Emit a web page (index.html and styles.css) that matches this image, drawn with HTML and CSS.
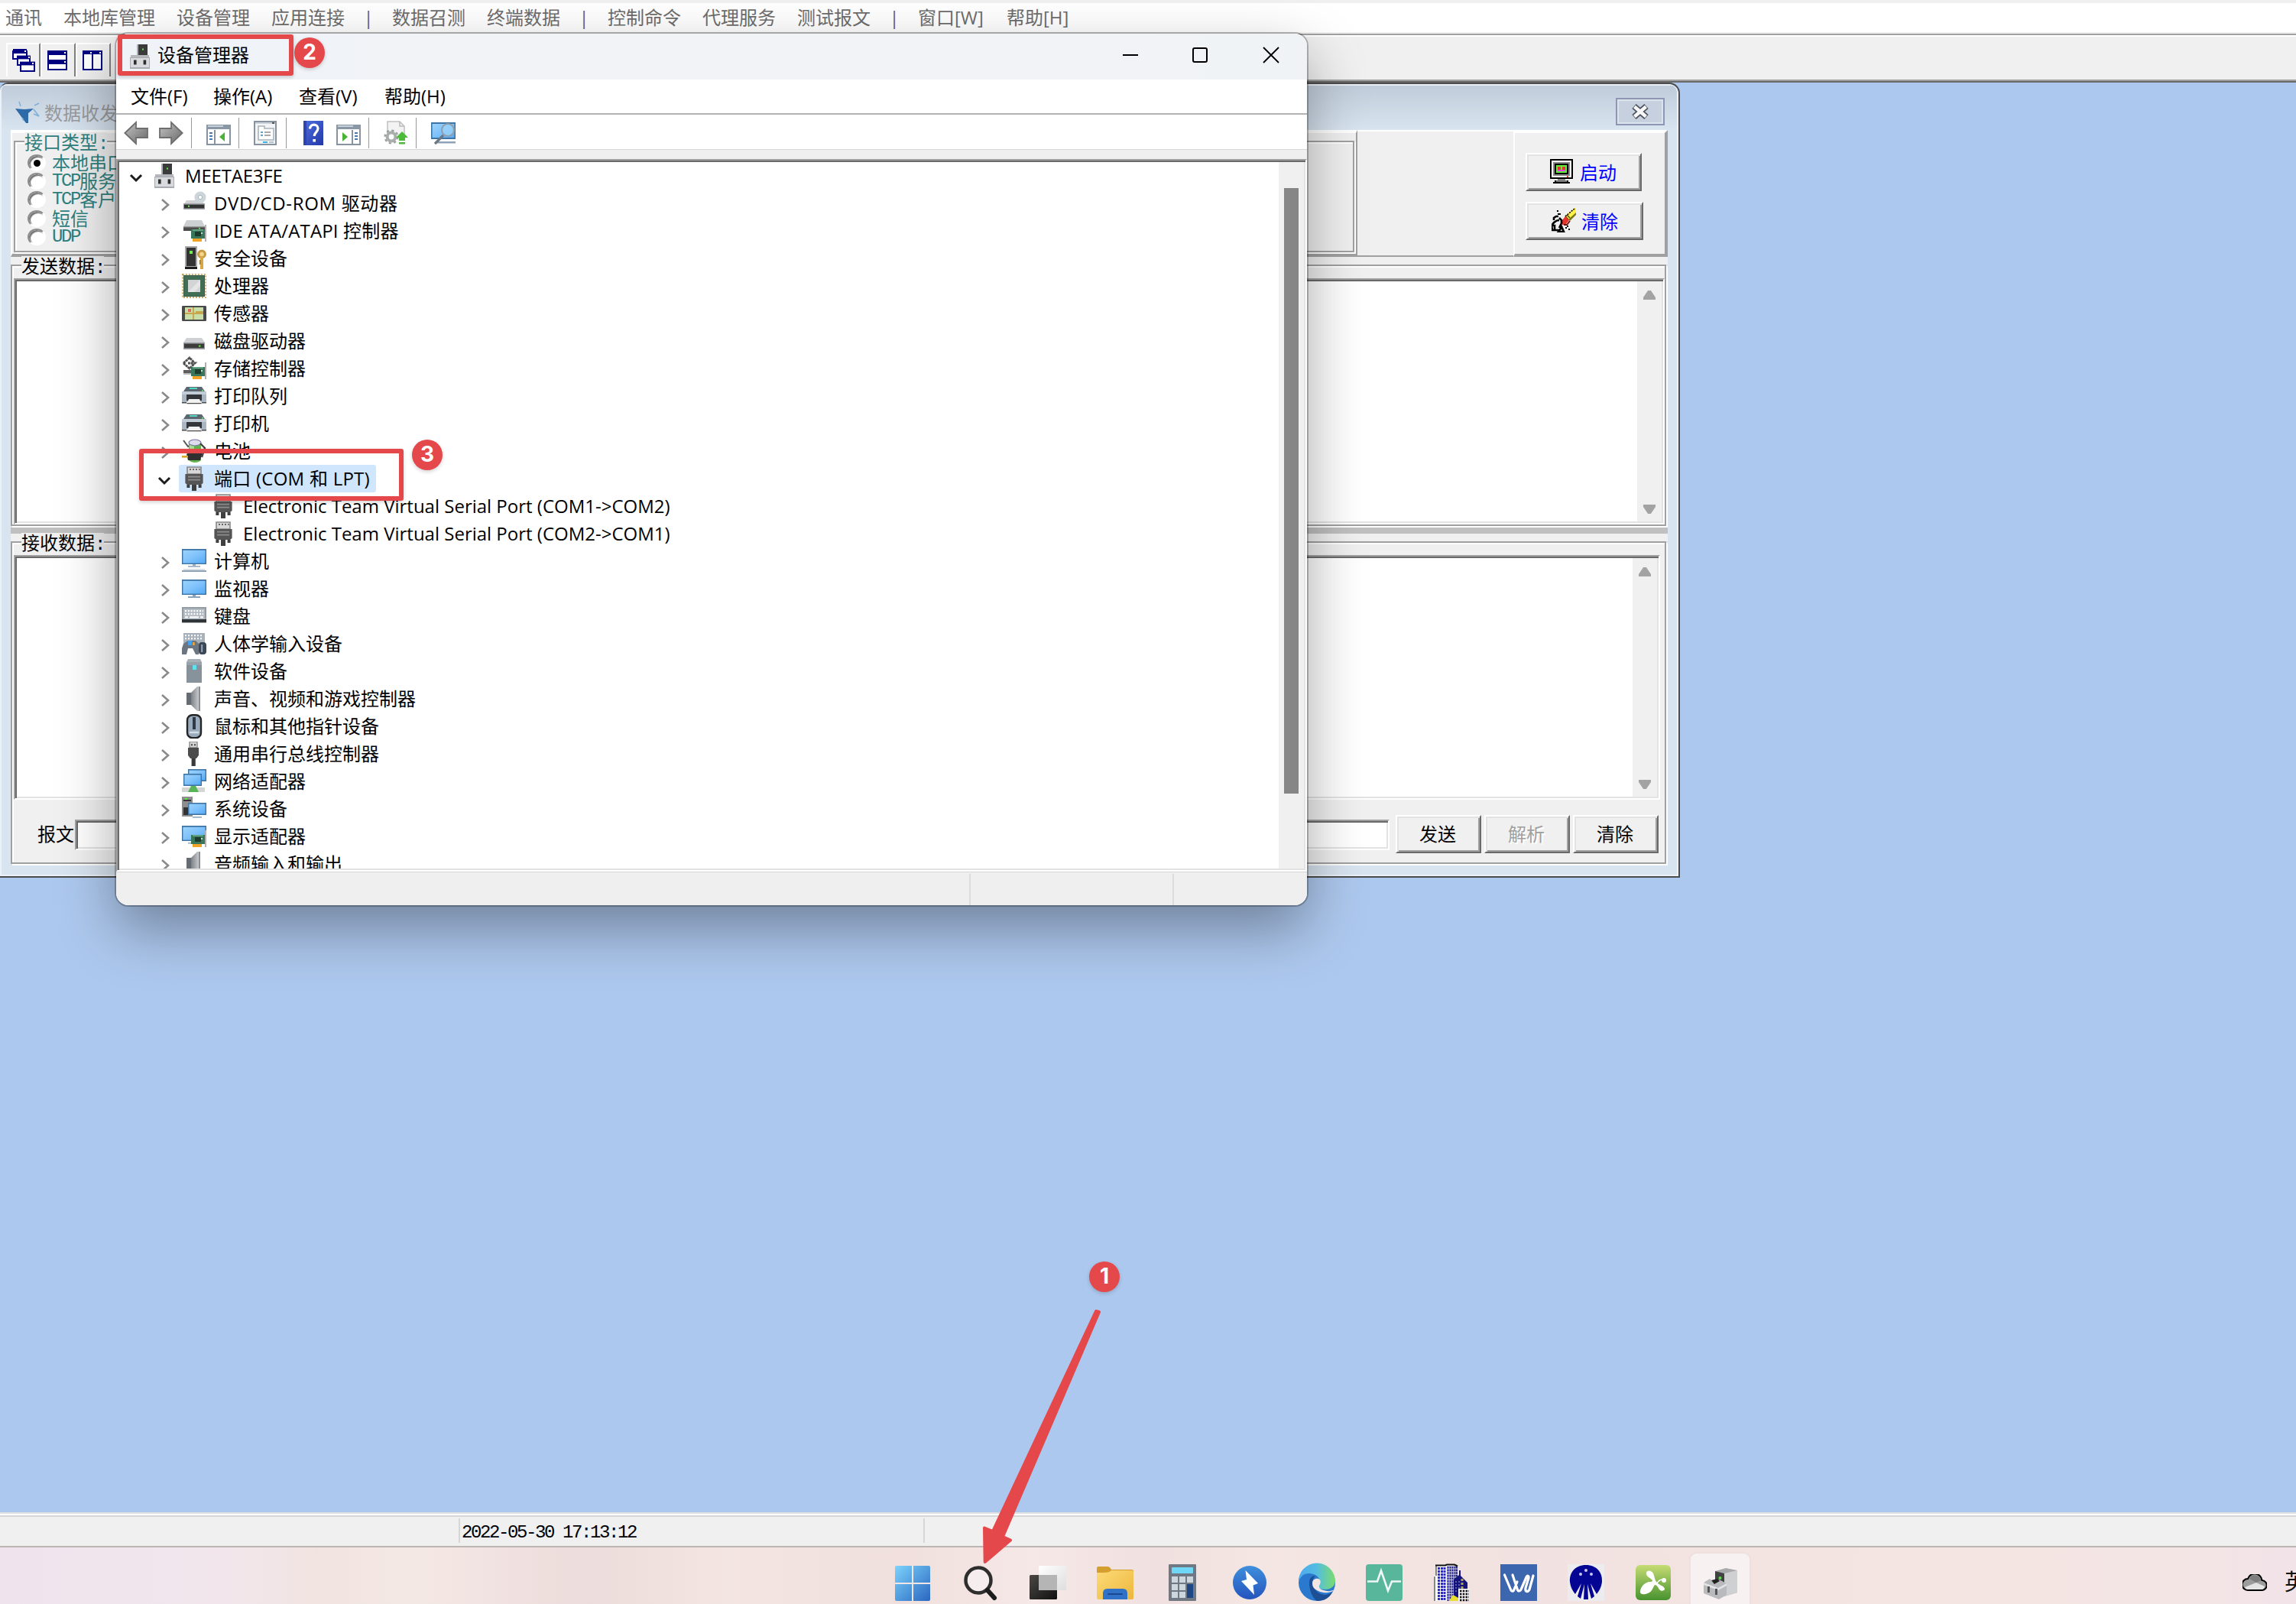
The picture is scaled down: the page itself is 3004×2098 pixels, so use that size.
FILE: index.html
```html
<!DOCTYPE html>
<html lang="zh-CN">
<head>
<meta charset="utf-8">
<title>设备管理器</title>
<link rel="stylesheet" href="styles.css">
</head>
<body>
<svg class="defs" width="0" height="0" aria-hidden="true">
  <defs>
    <linearGradient id="scr" x1="0" y1="0" x2="1" y2="1"><stop offset="0" stop-color="#9bd3fb"/><stop offset=".5" stop-color="#7fc2fb"/><stop offset="1" stop-color="#55aaf6"/></linearGradient>
    <linearGradient id="metal" x1="0" y1="0" x2="1" y2="0"><stop offset="0" stop-color="#7d8287"/><stop offset="1" stop-color="#d5d8db"/></linearGradient>
    <linearGradient id="arrowg" x1="0" y1="0" x2="1" y2="1"><stop offset="0" stop-color="#c4c4c4"/><stop offset="1" stop-color="#686868"/></linearGradient>
    <linearGradient id="helpg" x1="0" y1="0" x2="1" y2="1"><stop offset="0" stop-color="#4d6fe0"/><stop offset="1" stop-color="#2338a8"/></linearGradient>
    <linearGradient id="win" x1="0" y1="0" x2="1" y2="1"><stop offset="0" stop-color="#7cd3fc"/><stop offset="1" stop-color="#2a66c0"/></linearGradient>
    <linearGradient id="bolt" x1="0" y1="0" x2="0" y2="1"><stop offset="0" stop-color="#3f8fdc"/><stop offset="1" stop-color="#2454bd"/></linearGradient>
    <linearGradient id="fold" x1="0" y1="0" x2="1" y2="1"><stop offset="0" stop-color="#fddb78"/><stop offset="1" stop-color="#ecb63c"/></linearGradient>
    <linearGradient id="edgeTop" x1="0" y1="0" x2="1" y2="0"><stop offset="0" stop-color="#4da9ee"/><stop offset=".5" stop-color="#55bde0"/><stop offset="1" stop-color="#7bdc6b"/></linearGradient>
    <linearGradient id="green" x1="0" y1="0" x2="0" y2="1"><stop offset="0" stop-color="#c6dc74"/><stop offset="1" stop-color="#47922f"/></linearGradient>
    <linearGradient id="dark" x1="0" y1="0" x2="1" y2="1"><stop offset="0" stop-color="#4b4845"/><stop offset="1" stop-color="#111"/></linearGradient>
    <linearGradient id="pane" x1="0" y1="0" x2="1" y2="1"><stop offset="0" stop-color="#fff"/><stop offset="1" stop-color="#dedede"/></linearGradient>

    <symbol id="i-pc" viewBox="0 0 16 16"><path d="M7 0h6v8H7z" fill="#3b3b3b"/><path d="M6 0h1v8H6z" fill="#aab0b5"/><path d="M9.5 2.8h1v1h-1z" fill="#5ff04a"/><path d="M2 7h12v2H2z" fill="#b5b7bd"/><path d="M1.5 8.5h13V16h-13z" fill="#a9abb3"/><path d="M2 9h12v6H2z" fill="#d9dade"/><path d="M4 10.3h1.8v3H4zM10.3 10.3h1.8v3h-1.8z" fill="#2e2e2e"/></symbol>
    <symbol id="i-dvd" viewBox="0 0 16 16"><path d="M3 6h10l2 3H1z" fill="#cfd1d4"/><circle cx="12" cy="4" r="3.8" fill="#ccd5da"/><circle cx="12" cy="4" r="1.3" fill="#fff" stroke="#a9b5bb" stroke-width=".5"/><path d="M1 8h14v4H1z" fill="#a2a5a9"/><path d="M1.4 8.8h13.2v2.4H1.4z" fill="#333"/><path d="M4 9.4h1v1H4z" fill="#5ff04a"/></symbol>
    <symbol id="i-card" viewBox="0 0 16 16"><path d="M6 7h9v6H6z" fill="#39765a"/><path d="M7 7h7v1H7z" fill="#60a384"/><path d="M8.5 8.5h4v3h-4z" fill="#1d3c2e"/><path d="M12.5 9h1v1h-1z" fill="#b9e3ce"/><path d="M7 13h6v2H7z" fill="#f0a326"/><path d="M15 4h1v11h-1z" fill="#b0b0b0"/></symbol>
    <symbol id="i-ide" viewBox="0 0 16 16"><path d="M3 1h10l2 4H1z" fill="#cdd0d3"/><path d="M1 5h14v3H1z" fill="#4c4c4c"/><path d="M1 5h14v.7H1z" fill="#999"/><path d="M11 6h1v.8h-1z" fill="#5ff04a"/><use href="#i-card"/></symbol>
    <symbol id="i-sec" viewBox="0 0 16 16"><path d="M2 0h8v14H2z" fill="#a9a9a9"/><path d="M3 1h6v12H3z" fill="#333"/><path d="M5 3h2v2H5z" fill="#6fee4f"/><path d="M2 13.5h8V15H2z" fill="#1e1e1e"/><circle cx="13" cy="5.2" r="2.2" fill="#f0d490" stroke="#c99a3d" stroke-width="1.5"/><path d="M12 7h2v8h-2z" fill="#d9a743"/><path d="M11.400 9h1v3h-1z" fill="#b4822c"/></symbol>
    <symbol id="i-cpu" viewBox="0 0 16 16"><rect x=".4" y=".4" width="15.2" height="15.2" fill="none" stroke="#c5a256" stroke-width=".9" stroke-dasharray="1 1"/><path d="M1 1h14v14H1z" fill="#375b47"/><path d="M1.5 1.5h13v13h-13z" fill="#416e55"/><path d="M4 4h8v8H4z" fill="#d3d4d6"/><path d="M4 12l8-8v4l-4 4z" fill="#e5e5e5"/></symbol>
    <symbol id="i-sens" viewBox="0 0 16 16"><rect y="3" width="16" height="10" rx=".6" fill="#4a4a4a"/><path d="M2 4h12v8H2z" fill="#c9dfaa"/><path d="M2 8h12M7.5 4v8M9 7h5" stroke="#c8a64b" stroke-width="1"/><path d="M4 5h2v2H4z" fill="#e3685e"/></symbol>
    <symbol id="i-disk" viewBox="0 0 16 16"><path d="M3 6h10l2 3H1z" fill="#cfd1d4"/><path d="M1 9h14v4.5H1z" fill="#9a9da1"/><path d="M1.5 9.8h13v2.8h-13z" fill="#3c3c3c"/><path d="M11 10.8h1.2v1H11z" fill="#5ff04a"/></symbol>
    <symbol id="i-stor" viewBox="0 0 16 16"><path d="M1 4.5L5 1l3 3M1 4.500L5 8l3.500-3.500H4" fill="none" stroke="#4d4d4d" stroke-width="1.400" stroke-dasharray="1.600 .3"/><path d="M1 9h8v3H1z" fill="#5d5d5d"/><path d="M1 11h8v1H1z" fill="#bbb"/><use href="#i-card"/></symbol>
    <symbol id="i-print" viewBox="0 0 16 16"><path d="M3 2h10l2 3H1z" fill="#5b6670"/><path d="M5 2.5h5v1H5z" fill="#51d8c0"/><path d="M13 4h1v.8h-1z" fill="#63ef4a"/><path d="M0 5h16v7H0z" fill="#a9b5c1"/><path d="M0 5h16v2H0z" fill="#c2ccd6"/><path d="M3 7h10v4H3z" fill="#33363a"/><path d="M4.5 10h7l1 2.500h-9z" fill="#f2f2f2"/><path d="M0 12h3v.8H0zM13 12h3v.8h-3zM3.2 12.5h9.6v.6H3.2z" fill="#4c4c4c"/></symbol>
    <symbol id="i-batt" viewBox="0 0 16 16"><path d="M1 1l3 4 2-1" fill="none" stroke="#555"/><path d="M4.500 3h8v11c-2 2-6 2-8 0z" fill="#62b34b"/><path d="M5 3h3v11H5z" fill="#a8dd91"/><ellipse cx="8.500" cy="2.500" rx="4" ry="2" fill="#dcdcec" stroke="#7776a1" stroke-width=".6"/><path d="M12 3l3 3-2 6" fill="none" stroke="#444" stroke-width="1.200"/><path d="M3 10c4-3 8-2 11-3l-2 7H4z" fill="#303030"/><path d="M0 11h4v1.300H0z" fill="#dba429"/></symbol>
    <symbol id="i-port" viewBox="0 0 16 16"><path d="M3.5.5h9V5h-9z" fill="#d8d8d8" stroke="#888" stroke-width=".8"/><path d="M5 2h1M7 2h1M9 2h1M11 2h.8" stroke="#666"/><path d="M2.2 5h11.6v6l-1.3 1H3.5l-1.3-1z" fill="#555"/><path d="M4 6.8h8M4 8.8h8" stroke="#8d8d8d" stroke-width=".8"/><path d="M3.2 12h2v2h-2zM10.8 12h2v2h-2zM6.5 12h3v4h-3z" fill="#3f3f3f"/></symbol>
    <symbol id="i-comp" viewBox="0 0 16 16"><path d="M0 0h16v10H0z" fill="#3f75a5"/><path d="M.7 .9h14.6v8.4H.7z" fill="url(#scr)"/><path d="M4 11h8v.9H4zM7 10h2v1H7z" fill="#9fb0bf"/><path d="M0 14h16v1H0z" fill="#8fa3b7"/><path d="M1 13h14v1H1z" fill="#d9dfe5"/></symbol>
    <symbol id="i-mon" viewBox="0 0 16 16"><path d="M0 2h16v10H0z" fill="#3f75a5"/><path d="M.7 2.9h14.6v8.4H.7z" fill="url(#scr)"/><path d="M4 13h8v1H4zM7 12h2v1H7z" fill="#8fa3b7"/></symbol>
    <symbol id="i-key" viewBox="0 0 16 16"><path d="M0 2h16v10H0z" fill="#939ca5"/><path d="M1 3h14v7H1z" fill="#b4bcc3"/><path d="M2 4.600h12M2 6.600h12" stroke="#fff" stroke-dasharray="1 .9" stroke-width="1.100"/><path d="M2 8.600h2M5 8.600h6M12 8.600h2" stroke="#fff"/><path d="M0 10h16v2.200H0z" fill="#2f3439"/></symbol>
    <symbol id="i-hid" viewBox="0 0 16 16"><path d="M1 1h14v8H1z" fill="#a9b2ba"/><path d="M2 2.6h12M2 4.6h12" stroke="#fff" stroke-dasharray="1 1"/><path d="M1 8l3-2h5l2 2v7H9l-2-4H4l-1 4H0v-4z" fill="#6c7680"/><path d="M4 6h2.5v3H4z" fill="#46a2ee"/><path d="M7 7h1.4v2H7z" fill="#e7a43c"/><rect x="11" y="7" width="5" height="8" rx="2" fill="#3b4754"/><path d="M12.600 8.500h1v5h-1z" fill="#98a8b8"/></symbol>
    <symbol id="i-soft" viewBox="0 0 16 16"><path d="M4 0h8l1 2H3z" fill="#a9b0b6"/><path d="M3 2h10v13.5H3z" fill="#87929b"/><path d="M3 2h10v2H3z" fill="#98a2aa"/><path d="M7 4h2.5v3H7z" fill="#5fe2ef"/></symbol>
    <symbol id="i-snd" viewBox="0 0 16 16"><path d="M3 4h3v8H3z" fill="#666c72"/><path d="M6 4l4-4h2v16h-2l-4-4z" fill="url(#metal)"/><path d="M11 0h1v16h-1z" fill="#8b8f93"/></symbol>
    <symbol id="i-mouse" viewBox="0 0 16 16"><rect x="3.5" y=".6" width="9" height="15" rx="3.4" fill="#9aabbd" stroke="#242424" stroke-width="1.2"/><path d="M7 2h2v8H7z" fill="#2f3a45"/><path d="M5 12h6" stroke="#d4dde5" stroke-width="1.2"/></symbol>
    <symbol id="i-usb" viewBox="0 0 16 16"><path d="M5 0h5v4H5z" fill="#d5d5d5" stroke="#8b8b8b" stroke-width=".7"/><path d="M6 1.6h1v1H6zM8 1.6h1v1H8z" fill="#444"/><path d="M4 4h7v5l-1.5 2h-4L4 9z" fill="#4c4c4c"/><path d="M6.3 11h2.6v5H6.3z" fill="#3a3a3a"/></symbol>
    <symbol id="i-net" viewBox="0 0 16 16"><path d="M4 0h12v8H4z" fill="#3f75a5"/><path d="M4.7.8h10.6v6.4H4.7z" fill="url(#scr)"/><path d="M1 3h12v8H1z" fill="#3f75a5"/><path d="M1.7 3.8h10.6v6.4H1.7z" fill="url(#scr)"/><path d="M0 12h15v3H0z" fill="#d5d5d5"/><path d="M6 11h3l2 4H4z" fill="#58b557"/></symbol>
    <symbol id="i-sys" viewBox="0 0 16 16"><path d="M0 0h7v13H0z" fill="#8d8d8d"/><path d="M1 2h5v1H1zM1 7h3v5H1z" fill="#333"/><path d="M2 1h1.4v1H2z" fill="#5ff04a"/><path d="M4 4h12v8H4z" fill="#3f75a5"/><path d="M4.7 4.8h10.6v6.4H4.7z" fill="url(#scr)"/><path d="M7 13h6v.9H7z" fill="#9fb0bf"/></symbol>
    <symbol id="i-disp" viewBox="0 0 16 16"><path d="M0 1h16v10H0z" fill="#3f75a5"/><path d="M.7 1.9h14.6v8.4H.7z" fill="url(#scr)"/><path d="M4 12h3v.8H4z" fill="#9fb0bf"/><use href="#i-card"/></symbol>
  </defs>
</svg>

<div class="desktop">
  <nav class="menubar">
    <span>通讯</span><span>本地库管理</span><span>设备管理</span><span>应用连接</span><i>|</i>
    <span>数据召测</span><span>终端数据</span><i>|</i>
    <span>控制命令</span><span>代理服务</span><span>测试报文</span><i>|</i>
    <span class="w88">窗口[W]</span><span>帮助[H]</span>
  </nav>
  <div class="toolbar">
    <div class="tbtn"><svg width="30" height="30" viewBox="0 0 15 15"><g fill="#fff" stroke="#000080"><path d="M.5 1.5h9v5h-9z"/><path d="M.5 1.5h9" stroke-width="3"/><path d="M3.500 5.500h8v5h-8z"/><path d="M3 5.500h9" stroke-width="2.400"/><path d="M5.500 9.500h9v5h-9z"/><path d="M5 9.500h10" stroke-width="2.400"/></g><path d="M8 1h1v1H8zM10.500 5h1v1h-1zM13 9h1v1h-1z" fill="#fff"/></svg></div>
    <div class="tbtn"><svg width="26" height="26" viewBox="0 0 13 13"><path d="M.5 .5h12v12H.5z" fill="#fff" stroke="#000080"/><path d="M0 0h13v3H0zM0 6h13v3H0z" fill="#000080"/><path d="M11 1h1v1h-1zM11 7h1v1h-1z" fill="#fff"/></svg></div>
    <div class="tbtn"><svg width="26" height="26" viewBox="0 0 13 13"><path d="M.5 .5h12v12H.5zM6.500 0v13" fill="#fff" stroke="#000080"/><path d="M0 0h13v2.500H0z" fill="#000080"/><path d="M5 1h1v1H5zM11 1h1v1h-1z" fill="#fff"/></svg></div>
  </div>

  <main class="mdi">
    <section class="child">
      <header class="child-title">
        <svg width="34" height="30" viewBox="0 0 34 30"><path d="M1 10l12 1 12-1-7 6v13h-3z" fill="#2d6ba8"/><path d="M6 1l2 6M26 6l6-3M25 11l7 9-7-3M12 26l-2-4" stroke="#7fb0d8" stroke-width="1.600" fill="none"/></svg>
        <span>数据收发</span>
        <div class="child-close"><svg width="24" height="20" viewBox="0 0 24 20"><path d="M4 3l16 14M20 3L4 17" stroke="#4a4f5e" stroke-width="8"/><path d="M4.500 3.500l15 13M19.500 3.500l-15 13" stroke="#f7f7f7" stroke-width="4.600"/></svg></div>
      </header>
      <div class="top-row">
        <div class="panel left">
          <div class="etched radios">
            <span class="legend teal">接口类型<b class="mono">:</b></span>
            <label><i class="radio on"></i>本地串口</label>
            <label><i class="radio"></i><b class="mono">TCP</b>服务器</label>
            <label><i class="radio"></i><b class="mono">TCP</b>客户端</label>
            <label><i class="radio"></i>短信</label>
            <label><i class="radio"></i><b class="mono">UDP</b></label>
          </div>
        </div>
        <div class="panel mid"></div>
        <div class="panel right">
          <div class="btn blue b1">
            <svg width="30" height="32" viewBox="0 0 15 16"><path d="M.5 .5h14v12H.5z" fill="#fff" stroke="#000"/><path d="M2 2h11v9H2z" fill="#888"/><path d="M3 3h9v7H3z" fill="#000"/><path d="M4 4h7v5H4z" fill="#62ee3c"/><path d="M5 5h2v2H5zM8 5h2v2H8z" fill="#e8322c"/><path d="M5 7h5v1H5z" fill="#e83be8"/><path d="M11 11h1v1h-1z" fill="#e8322c"/><path d="M5 13h5v1H5z" fill="#888"/><path d="M3 14h9v1H3zM2 15h11v1H2z" fill="#000"/><path d="M4 14h7v1H4z" fill="#777"/></svg>
            启动</div>
          <div class="btn blue b2">
            <svg width="32" height="32" viewBox="0 0 16 16"><path d="M15 0h1v3l-5 5-2-3z" fill="#fff04a"/><path d="M15 .5L9 5.500" stroke="#000" stroke-width=".8" stroke-dasharray="1 .7"/><path d="M16 3v1.500L12 8.500l-1-1z" fill="#77761a"/><path d="M10 4.500l2 2M9 5.500l2 2" stroke="#444310" stroke-width=".7"/><path d="M9 5.500L11.500 8 9 11H7V8z" fill="#e8322c"/><path d="M8 11h2l2-2.500" stroke="#6f1613" fill="none"/><path d="M3.500 2h1M5 4h1M9 13h1M11 14h1M10 12h1M4 4h1" stroke="#000" stroke-width=".9"/><path d="M1.500 8V6.500L3 5.500h1.500M0 13c0-3 3-5 5-5M5 6.500L6.500 8v2L5 13M1 14.500h4M6 11l2 4.500H4.500L7 12M0 11.500h2v3H.5z" stroke="#000" stroke-width="1.300" fill="none"/></svg>
            清除</div>
        </div>
      </div>
      <div class="etched send">
        <span class="legend">发送数据<b class="mono">:</b></span>
        <div class="sunken memo"><div class="sb"><i class="up"></i><i class="down"></i></div></div>
      </div>
      <div class="splitter"></div>
      <div class="etched recv">
        <span class="legend">接收数据<b class="mono">:</b></span>
        <div class="sunken memo"><div class="sb"><i class="up"></i><i class="down"></i></div></div>
        <div class="send-row">
          <span class="lbl">报文</span><div class="sunken input"></div>
          <div class="btns"><div class="btn">发送</div><div class="btn off">解析</div><div class="btn">清除</div></div>
        </div>
      </div>
    </section>
  </main>

  <footer class="status"><div class="s1"></div><div class="s2">2022-05-30 17:13:12</div></footer>

  <div class="taskbar">
    <div class="apps">
      <svg viewBox="0 0 48 48"><rect x="0" y="2" width="46" height="46" rx="2" fill="url(#win)"/><path d="M23 2v46M0 25h46" stroke="#f1e5e6" stroke-width="2"/></svg>
      <svg viewBox="0 0 48 48"><circle cx="21" cy="21" r="16.500" fill="#f6eeee" stroke="#2e2e2e" stroke-width="4.500"/><path d="M33 34l9 10" stroke="#1d1d1d" stroke-width="6" stroke-linecap="round"/></svg>
      <svg viewBox="0 0 48 48"><rect x="0" y="14" width="36" height="32" rx="1.500" fill="url(#dark)"/><rect x="12" y="2" width="36" height="32" rx="1.500" fill="url(#pane)"/><path d="M12 14h24v20H12z" fill="#b5b5b5"/></svg>
      <svg viewBox="0 0 48 48"><path d="M0 5q0-2 2-2h12q3 0 5 4h27q2 0 2 2v10H0z" fill="#d59f30"/><path d="M0 11h9q8 0 10-3h27q2 0 2 2v34q0 2-2 2H2q-2 0-2-2z" fill="url(#fold)"/><path d="M8 46V38q0-6 6-6h20q6 0 6 6v8z" fill="#2f72c8"/><path d="M15 39h18" stroke="#1b4890" stroke-width="2" stroke-linecap="round"/></svg>
      <svg viewBox="0 0 48 48"><rect x="6" width="36" height="48" rx="1" fill="#707983"/><rect x="10" y="4" width="28" height="8" rx="1" fill="#70d7f9"/><g fill="#cdd5dd"><path d="M10 16h8v8h-8zM20 16h8v8h-8zM30 16h8v8h-8zM10 26h8v8h-8zM20 26h8v8h-8zM10 36h8v8h-8zM20 36h8v8h-8z"/></g><path d="M30 26h8v18h-8z" fill="#1f4684"/></svg>
      <svg viewBox="0 0 48 48"><circle cx="24" cy="24" r="22" fill="url(#bolt)"/><path d="M18.500 8L35 25l-6.500 2.500L30 40 13 22l7-2z" fill="#fff"/></svg>
      <svg viewBox="0 0 48 48"><circle cx="24" cy="24" r="24" fill="#2b79cf"/><path d="M0 24A24 24 0 0 1 48 21c0 8-6 12-13 12-8 0-10-3-8-6 3-7-2-14-12-15C7 11 1 17 0 24z" fill="url(#edgeTop)"/><path d="M14 24c0-6 4-9 8-9-8 8-2 23 12 25 5 0 9-3 10-3-5 9-13 11-20 11-6-4-10-14-10-24z" fill="#1e4f94"/><path d="M18 25c0-5 4-7 8-6 4 2 3 6 1 9-1 4 4 6 10 7 5 1 9-2 9-1-4 4-15 4-20 1-5-2-8-5-8-10z" fill="#f2e5e4"/></svg>
      <svg viewBox="0 0 48 48"><rect width="48" height="48" rx="4" fill="#58b69b"/><path d="M2 22.500h13l5-14 9 26 5-12h12" fill="none" stroke="#eef7f5" stroke-width="2.600"/></svg>
      <svg viewBox="0 0 48 48"><path d="M4 1h28v47H1V15h3z" fill="#fff"/><path d="M2 16v32M4 2v13" stroke="#555" stroke-width="1.400"/><path d="M7.500 4v44M11.500 4v44M15 4v44" stroke="#2a2ad6" stroke-width="3" stroke-dasharray="3 1"/><path d="M18 2h14v46H18z" fill="#c9c9e6"/><path d="M19.500 3v45M22.500 3v45M25.500 3v45M28.500 3v36M31 3v36" stroke="#1c1c84" stroke-width="1.900" stroke-dasharray="2.600 1"/><path d="M3 1.500h13l2-1h10l4 2" stroke="#111" stroke-width="2" fill="none"/><path d="M27 20l7-6V8h2v7l9 9v24H27z" fill="#14147c"/><path d="M30 22v16M34 22v10" stroke="#8f8fc4" stroke-width="1.200" stroke-dasharray="2 2"/><path d="M38 19v13" stroke="#b3a558" stroke-width="3" stroke-dasharray="3 2"/><path d="M33 32h15v16H33z" fill="#f4f4f4"/><path d="M35 35h12M35 39h12M35 43h12M35 47h12" stroke="#111" stroke-width="2.400" stroke-dasharray="2.400 1.400"/><path d="M21 48l5-8 7 4v4z" fill="#e9df31"/></svg>
      <svg viewBox="0 0 48 48"><path d="M0 0h48v48H0z" fill="#3c66ae"/><path d="M5.500 14l8 19c1.200 3 3.500 3 4.500 0l4-10M16 14l6 18c1 4 4 4 5.500 0L34 17c1-3 3.500-2 3 1l-4 13c-1 5 3 6 5 2l5-18" fill="none" stroke="#fff" stroke-width="3.200" stroke-linecap="round" stroke-linejoin="round"/></svg>
      <svg viewBox="0 0 48 48"><path d="M0 0h48v48H0z" fill="#ecebed"/><path d="M24 1c14 0 22 10 21 22-1 8-4 12-7 16l-8-14 5 17-4 3-5-19 1 20h-6l1-20-5 19-4-3 5-17-8 14c-3-4-6-8-7-16C2 11 10 1 24 1z" fill="#050594"/><circle cx="24" cy="8" r="2" fill="#c8c8ea"/><circle cx="17" cy="13" r="2" fill="#c8c8ea"/><circle cx="31" cy="13" r="2" fill="#c8c8ea"/></svg>
      <svg viewBox="0 0 48 48"><rect x="1" y="1" width="46" height="46" rx="6" fill="url(#green)"/><path d="M15 12c0-5 7-4 9 0 2 5 2 9 5 12 2 3 9 4 10 8 0 3-5 4-7 1-2-3-3-6-6-6-2 2-3 9-9 11-5 2-10 2-10-2 0-6 6-13 13-13 3 0 4-1 2-3-3-3-7-4-7-8z" fill="#fff"/><path d="M29 25c1-3 5-5 6-5" stroke="#fff" stroke-width="1.600" fill="none"/><circle cx="38" cy="21" r="3" fill="#fff"/></svg>
      <div class="active"><svg viewBox="0 0 48 48"><path d="M17 9l14-4 15 3v29l-17 5-12-5z" fill="#a9aaac"/><path d="M17 9l12 3v30l-12-5z" fill="#424242"/><path d="M29 12l17-4v29l-17 5z" fill="#cfd0d2"/><circle cx="23.500" cy="18" r="2" fill="#4fe33a"/><path d="M2 24l8-5 4 4 8-3 10 5v15l-10 6L2 38z" fill="#b9babd"/><path d="M2 24l19 7 11-6v3l-11 6L2 27z" fill="#e3e3e5"/><path d="M7 29h3v8H7zM17 32h3v8h-3z" fill="#555"/><path d="M12 21l8-2 3 3-7 4z" fill="#222"/></svg></div>
    </div>
    <div class="tray">
      <svg width="32" height="22" viewBox="0 0 32 22"><path d="M7 21a6 6 0 0 1 0-15A9.500 9.500 0 0 1 25.500 8 6.300 6.300 0 0 1 25 21z" fill="#9c9c9c" stroke="#000" stroke-width="2"/><path d="M9 6a8 8 0 0 1 15 2l-6 3z" fill="#7d7d7d"/><path d="M3 17l15-6 11 5q-1 4-4 4H7q-3 0-4-3z" fill="#e4e4e4"/></svg>
      <span>英</span>
    </div>
  </div>

  <section class="dm">
    <header class="dm-title">
      <svg class="ic" width="32" height="32"><use href="#i-pc"/></svg><h1>设备管理器</h1>
      <svg class="ctl" width="208" height="22" viewBox="0 0 208 22"><path d="M1 11h20" stroke="#000" stroke-width="2"/><rect x="93" y="2" width="18" height="18" rx="2" fill="none" stroke="#000" stroke-width="2"/><path d="M185 1l20 20M205 1l-20 20" stroke="#000" stroke-width="1.800"/></svg>
    </header>
    <nav class="dm-menu"><span>文件(F)</span><span>操作(A)</span><span>查看(V)</span><span>帮助(H)</span></nav>
    <div class="dm-tools">
      <svg class="t back" viewBox="0 0 16 16"><path d="M.7 8L8 1v4h7.500v6H8v4z" fill="url(#arrowg)" stroke="#6e6e6e" stroke-width=".9"/></svg>
      <svg class="t fwd" viewBox="0 0 16 16"><path d="M15.300 8L8 1v4H.5v6H8v4z" fill="url(#arrowg)" stroke="#6e6e6e" stroke-width=".9"/></svg>
      <i></i>
      <svg class="t" viewBox="0 0 16 16"><path d="M.5 3h15v12.500H.5z" fill="#fff" stroke="#8793a0"/><path d="M0 2.500h16v3H0z" fill="#8a97a5"/><path d="M1 3.500h10" stroke="#dde5ec" stroke-width=".8"/><path d="M5.500 6v9" stroke="#8793a0"/><path d="M2 8h2M2 10h2M2 12h2" stroke="#4a79b0"/><path d="M12 7.500v6l-3.500-3z" fill="#4ab336"/></svg>
      <i></i>
      <svg class="t" viewBox="0 0 16 16"><path d="M.5.5h14v15H.5z" fill="#f2f4f6" stroke="#8793a0"/><path d="M1 1.500h13" stroke="#cbd3da"/><path d="M12 1.500h1.500" stroke="#555"/><path d="M3 5V3.500h4V5h6v7.500H3z" fill="#fff" stroke="#a8b2bc" stroke-width=".8"/><path d="M4.500 7.500h1.500M4.500 9.500h1.500" stroke="#49a8e6"/><path d="M7 7.500h4M7 9.500h4" stroke="#a9a9a9"/><path d="M6 14h3" stroke="#36b5e4"/><path d="M10 14h3" stroke="#b8c2cc"/></svg>
      <i></i>
      <svg class="t help" viewBox="0 0 16 16"><path d="M1.500 0h13v16h-13z" fill="url(#helpg)"/><path d="M1.500 0h2v16h-2z" fill="#2c43b0"/><path d="M5.800 5.200C5.800 1.600 11 1.800 11 5c0 2.400-2.400 2.400-2.400 5" fill="none" stroke="#fff" stroke-width="1.600"/><path d="M7.700 12h1.800v1.800H7.700z" fill="#fff"/></svg>
      <svg class="t show" viewBox="0 0 16 16"><path d="M.5 3h15v12.500H.5z" fill="#fff" stroke="#8793a0"/><path d="M0 2.500h16v3H0z" fill="#8a97a5"/><path d="M1 3.500h10" stroke="#dde5ec" stroke-width=".8"/><path d="M10.500 6v9" stroke="#8793a0"/><path d="M12 8h2M12 10h2M12 12h2" stroke="#4a79b0"/><path d="M4 7.500v6l3.500-3z" fill="#4ab336"/></svg>
      <i></i>
      <svg class="t" viewBox="0 0 16 16"><path d="M2.500.5h8l3 3V11h-11z" fill="#f3f3f3" stroke="#c2c2c2" stroke-width=".8"/><path d="M10.500.5v3h3" fill="none" stroke="#bbb" stroke-width=".8"/><circle cx="5" cy="10.500" r="2.700" fill="#fff" stroke="#a9aead" stroke-width="2"/><circle cx="5" cy="10.500" r="4.200" fill="none" stroke="#9aa09f" stroke-width="1.200" stroke-dasharray="1.600 1.700"/><path d="M12 7l4 4h-2v2h-4v-2H8zM10 14h4v1.200h-4z" fill="#4cbb38"/></svg>
      <i></i>
      <svg class="t" viewBox="0 0 16 16"><path d="M0 1h16v11H0z" fill="#3f75a5"/><path d="M.8 2h14.400v9H.8z" fill="url(#scr)"/><path d="M4 13.500h12v1.200H4z" fill="#8fa3b7"/><circle cx="11" cy="6" r="4" fill="#9ed6fa" fill-opacity=".7" stroke="#8fa0af" stroke-width="1.100"/><path d="M8 9.500L2.500 15" stroke="#6c7882" stroke-width="1.600"/></svg>
    </div>
    <div class="dm-gap"></div>
    <div class="sunken tree">
      <ul>
        <li class="root"><svg class="ch open" viewBox="0 0 24 24"><path d="M5 9l7 7 7-7"/></svg><div class="node"><svg class="ic"><use href="#i-pc"/></svg><span class="host">MEETAE3FE</span></div></li>
        <li><svg class="ch" viewBox="0 0 24 24"><path d="M8 5l8 7-8 7"/></svg><div class="node"><svg class="ic"><use href="#i-dvd"/></svg><span class="dvd">DVD/CD-ROM 驱动器</span></div></li>
        <li><svg class="ch" viewBox="0 0 24 24"><path d="M8 5l8 7-8 7"/></svg><div class="node"><svg class="ic"><use href="#i-ide"/></svg><span class="ide">IDE ATA/ATAPI 控制器</span></div></li>
        <li><svg class="ch" viewBox="0 0 24 24"><path d="M8 5l8 7-8 7"/></svg><div class="node"><svg class="ic"><use href="#i-sec"/></svg><span>安全设备</span></div></li>
        <li><svg class="ch" viewBox="0 0 24 24"><path d="M8 5l8 7-8 7"/></svg><div class="node"><svg class="ic"><use href="#i-cpu"/></svg><span>处理器</span></div></li>
        <li><svg class="ch" viewBox="0 0 24 24"><path d="M8 5l8 7-8 7"/></svg><div class="node"><svg class="ic"><use href="#i-sens"/></svg><span>传感器</span></div></li>
        <li><svg class="ch" viewBox="0 0 24 24"><path d="M8 5l8 7-8 7"/></svg><div class="node"><svg class="ic"><use href="#i-disk"/></svg><span>磁盘驱动器</span></div></li>
        <li><svg class="ch" viewBox="0 0 24 24"><path d="M8 5l8 7-8 7"/></svg><div class="node"><svg class="ic"><use href="#i-stor"/></svg><span>存储控制器</span></div></li>
        <li><svg class="ch" viewBox="0 0 24 24"><path d="M8 5l8 7-8 7"/></svg><div class="node"><svg class="ic"><use href="#i-print"/></svg><span>打印队列</span></div></li>
        <li><svg class="ch" viewBox="0 0 24 24"><path d="M8 5l8 7-8 7"/></svg><div class="node"><svg class="ic"><use href="#i-print"/></svg><span>打印机</span></div></li>
        <li><svg class="ch" viewBox="0 0 24 24"><path d="M8 5l8 7-8 7"/></svg><div class="node"><svg class="ic"><use href="#i-batt"/></svg><span>电池</span></div></li>
        <li><svg class="ch open" viewBox="0 0 24 24"><path d="M4 9l7 7 7-7"/></svg><div class="node sel"><svg class="ic"><use href="#i-port"/></svg><span class="ports">端口 (COM 和 LPT)</span></div></li>
        <li class="leaf"><div class="node"><svg class="ic"><use href="#i-port"/></svg><span>Electronic Team Virtual Serial Port (COM1-&gt;COM2)</span></div></li>
        <li class="leaf"><div class="node"><svg class="ic"><use href="#i-port"/></svg><span>Electronic Team Virtual Serial Port (COM2-&gt;COM1)</span></div></li>
        <li><svg class="ch" viewBox="0 0 24 24"><path d="M8 5l8 7-8 7"/></svg><div class="node"><svg class="ic"><use href="#i-comp"/></svg><span>计算机</span></div></li>
        <li><svg class="ch" viewBox="0 0 24 24"><path d="M8 5l8 7-8 7"/></svg><div class="node"><svg class="ic"><use href="#i-mon"/></svg><span>监视器</span></div></li>
        <li><svg class="ch" viewBox="0 0 24 24"><path d="M8 5l8 7-8 7"/></svg><div class="node"><svg class="ic"><use href="#i-key"/></svg><span>键盘</span></div></li>
        <li><svg class="ch" viewBox="0 0 24 24"><path d="M8 5l8 7-8 7"/></svg><div class="node"><svg class="ic"><use href="#i-hid"/></svg><span>人体学输入设备</span></div></li>
        <li><svg class="ch" viewBox="0 0 24 24"><path d="M8 5l8 7-8 7"/></svg><div class="node"><svg class="ic"><use href="#i-soft"/></svg><span>软件设备</span></div></li>
        <li><svg class="ch" viewBox="0 0 24 24"><path d="M8 5l8 7-8 7"/></svg><div class="node"><svg class="ic"><use href="#i-snd"/></svg><span>声音、视频和游戏控制器</span></div></li>
        <li><svg class="ch" viewBox="0 0 24 24"><path d="M8 5l8 7-8 7"/></svg><div class="node"><svg class="ic"><use href="#i-mouse"/></svg><span>鼠标和其他指针设备</span></div></li>
        <li><svg class="ch" viewBox="0 0 24 24"><path d="M8 5l8 7-8 7"/></svg><div class="node"><svg class="ic"><use href="#i-usb"/></svg><span>通用串行总线控制器</span></div></li>
        <li><svg class="ch" viewBox="0 0 24 24"><path d="M8 5l8 7-8 7"/></svg><div class="node"><svg class="ic"><use href="#i-net"/></svg><span>网络适配器</span></div></li>
        <li><svg class="ch" viewBox="0 0 24 24"><path d="M8 5l8 7-8 7"/></svg><div class="node"><svg class="ic"><use href="#i-sys"/></svg><span>系统设备</span></div></li>
        <li><svg class="ch" viewBox="0 0 24 24"><path d="M8 5l8 7-8 7"/></svg><div class="node"><svg class="ic"><use href="#i-disp"/></svg><span>显示适配器</span></div></li>
        <li><svg class="ch" viewBox="0 0 24 24"><path d="M8 5l8 7-8 7"/></svg><div class="node"><svg class="ic"><use href="#i-snd"/></svg><span>音频输入和输出</span></div></li>
      </ul>
      <div class="dm-sb"><div class="thumb"></div></div>
    </div>
    <footer class="dm-status"><div></div><div></div><div></div></footer>
  </section>

  <div class="mark box-title"></div>
  <div class="mark box-port"></div>
  <div class="num n1">1</div>
  <div class="num n2">2</div>
  <div class="num n3">3</div>
  <svg class="arrow" width="170" height="350" viewBox="1275 1705 170 350"><path d="M1434 1715L1299 2003 1288 1998.500 1288.700 2043 1322 2014.500 1312 2010 1438 1716z" fill="#e5484b" stroke="#e5484b" stroke-width="4" stroke-linejoin="round"/></svg>
</div>
</body>
</html>
```
FILE: styles.css
```css
* { box-sizing: border-box; }
body { margin: 0; overflow: hidden; font-family: "Open Sans", "Noto Sans CJK SC", sans-serif; font-size: 24px; color: #000; }
.defs { position: absolute; }
.desktop { position: relative; width: 3004px; height: 2098px; overflow: hidden; display: flex; flex-direction: column; background: #adc8ee; }
svg { display: block; flex: none; }

/* application menu and toolbar */
.menubar { height: 44px; flex: none; display: flex; gap: 28px; padding: 1px 0 0 7px; line-height: 36px; color: #6d6d6d; background: #fff; border-top: 4px solid #f0f0f0; border-bottom: 2px solid #f0f0f0; white-space: nowrap; }
.menubar i { width: 6px; font-style: normal; display: flex; justify-content: center; color: #6f5a78; }
.menubar .w88 { width: 88px; }
.toolbar { height: 64px; flex: none; display: flex; padding: 10px 0 0 8px; background: #f0f0f0; border-top: 2px solid #a0a0a0; box-shadow: inset 0 2px #fff, inset 0 -2px #696969, inset 0 -4px #a0a0a0; }
.tbtn { width: 45px; height: 44px; border-left: 2px solid #fff; border-top: 2px solid #fff; border-right: 2px solid #808080; padding: 6px 0 0 6px; }
.tbtn + .tbtn { width: 46px; padding-top: 8px; padding-left: 7px; }
.mdi { flex: 1; position: relative; }

/* classic widgets */
.etched { position: relative; border: 2px solid #a0a0a0; box-shadow: inset 2px 2px #fff, 2px 2px #fff; }
.sunken { background: #fff; border: 2px solid; border-color: #a0a0a0 #fff #fff #a0a0a0; box-shadow: inset 2px 2px #696969, inset -2px -2px #e3e3e3; padding: 2px; }
.legend { position: absolute; top: -13px; left: 12px; height: 26px; line-height: 26px; background: #f0f0f0; white-space: nowrap; }
.mono { font-family: "Liberation Mono", monospace; font-weight: 400; font-size: 24px; letter-spacing: -2.4px; }
.teal { color: #2f7f7d; }
.btn { width: 112px; height: 50px; display: flex; align-items: center; justify-content: center; padding: 0 2px 3px 0; background: #f0f0f0; border: 2px solid; border-color: #fff #696969 #696969 #fff; box-shadow: inset 2px 2px #e3e3e3, inset -2px -2px #a0a0a0; }
.btn.off { color: #a0a0a0; text-shadow: 2px 2px #fff; }

/* child window */
.child { position: absolute; left: 0; top: 0; width: 2198px; height: 1040px; padding: 0 14px 14px; background: #d8e4f0; border: 2px solid #4c4c4c; border-left: 0; border-radius: 10px 14px 0 0; box-shadow: inset -2px -2px #eaf1f8, inset 2px 2px #eaf1f8; }
.child-title { height: 60px; margin: 0 -12px; padding: 0 0 0 15px; display: flex; align-items: center; color: #98999b; background: linear-gradient(#e8eef4 2px, #c1ccda 2px, #d8e4f0); border-radius: 8px 12px 0 0; }
.child-title span { margin-left: 5px; padding-top: 15px; line-height: 30px; }
.child-title > svg { margin: 14px 0 0 2px; }
.child-close { margin: 12px 16px 0 auto; width: 64px; height: 36px; display: flex; align-items: center; justify-content: center; border: 2px solid #8d97b3; box-shadow: inset 0 0 0 2px #dbe3ed; background: #c6d0de; }
.top-row { height: 166px; display: flex; background: #f0f0f0; }
.panel.left { width: 1762px; border-style: solid; border-width: 4px 2px 4px 2px; border-color: #fff #a0a0a0 #a0a0a0 #fff; padding: 10px 2px 2px 2px; }
.radios { height: 146px; padding: 15px 0 0 16px; color: #2f7f7d; }
.radios label { display: flex; align-items: center; height: 24.2px; white-space: nowrap; line-height: 24px; }
.radio { width: 24px; height: 22px; margin-right: 8px; border-radius: 50%; background: #fff; border: 2px solid; border-color: #8c8c8c #fff #fff #8c8c8c; box-shadow: inset 2px 2px 1px #777; display: flex; align-items: center; justify-content: center; }
.radio.on::after { content: ""; width: 9px; height: 9px; border-radius: 50%; background: #000; }
.panel.mid { width: 204px; border-top: 2px solid #fff; border-bottom: 2px solid #a0a0a0; }
.panel.right { width: 202px; border-style: solid; border-width: 4px 4px 4px 2px; border-color: #fff #a0a0a0 #a0a0a0 #fff; padding: 26px 0 0 14px; display: flex; flex-direction: column; gap: 14px; }
.blue { color: #00f; justify-content: flex-start; padding-bottom: 2px; }
.b1 { width: 152px; padding-left: 30px; gap: 9px; }
.b2 { width: 154px; padding-left: 32px; gap: 7px; }
.send { height: 342px; margin: 10px 2px 2px 0; padding: 16px 0 0 2px; background: #f0f0f0; }
.recv { height: 422px; margin: 10px 2px 0 0; padding: 16px 6px 0 2px; background: #f0f0f0; }
.send::before, .recv::before { content: ""; position: absolute; left: -2px; right: -4px; top: -12px; height: 10px; background: #f0f0f0; }
.memo { display: flex; justify-content: flex-end; }
.send .memo { height: 322px; }
.recv .memo { height: 320px; }
.sb { width: 32px; background: #f0f0f0; display: flex; flex-direction: column; justify-content: space-between; align-items: center; padding: 12px 0 10px; }
.sb i { width: 16px; height: 12px; background: #a3a3a3; }
.sb .up { clip-path: polygon(38% 0, 62% 0, 100% 75%, 100% 100%, 0 100%, 0 75%); }
.sb .down { clip-path: polygon(0 0, 100% 0, 100% 25%, 62% 100%, 38% 100%, 0 25%); }
.splitter { height: 8px; background: #c0c0c0; }
.send-row { margin-top: 20px; display: flex; align-items: center; height: 50px; padding-left: 32px; }
.lbl { width: 48px; margin: -3px 1px 0 -1px; white-space: nowrap; }
.input { width: 1720px; height: 40px; margin-top: 2px; }
.btns { display: flex; gap: 4px; margin-left: 8px; }

/* status bar */
.status { height: 46px; flex: none; display: flex; padding: 8px 0 4px; background: #f0f0f0; border-bottom: 2px solid #bdb5b3; box-shadow: inset 0 2px #e0e0e0, inset 0 4px #fff, inset 0 6px #d6d6d6; }
.status > div { border-right: 2px solid #d6d6d6; }
.s1 { width: 602px; }
.s2 { width: 608px; padding-left: 2px; line-height: 38px; font-family: "Liberation Mono", monospace; letter-spacing: -2.4px; }

/* taskbar */
.taskbar { height: 74px; flex: none; display: flex; background: linear-gradient(90deg, #efe4ee 0, #f2e6ec 300px, #f1e4e0 420px, #f4e8e5 540px, #ecdcdb 770px, #f3e5e2 950px, #f0dfdd 1180px, #f5e8e6 1350px, #f0e0df 1520px, #f4e6e2 1650px, #f1e1e0 2000px, #f4e5e2 2500px, #f3e5e4 2850px, #f2e3e9 3004px); }
.apps { display: flex; flex: none; padding-left: 1171px; gap: 40px; width: 2290px; }
.apps > svg { width: 48px; height: 48px; margin-top: 22px; overflow: visible; }
.active { width: 77px; height: 74px; margin: 8px 0 0 -15px; padding: 14px 0 0 15px; border-radius: 8px; background: #f8f1f1; box-shadow: 0 0 0 2px #efe0e0; flex: none; }
.active svg { width: 48px; height: 48px; }
.tray { display: flex; margin-left: 644px; gap: 23px; padding-top: 35px; }
.tray span { font-size: 29px; line-height: 40px; margin-top: -10px; width: 30px; flex: none; color: #111; }

/* device manager window */
.dm { position: absolute; left: 152px; top: 44px; width: 1558px; height: 1140px; display: flex; flex-direction: column; background: #fff; border-radius: 16px; overflow: hidden; box-shadow: 0 0 0 2px rgba(0,0,0,.25), 0 30px 76px rgba(0,0,0,.36); }
.dm-title { height: 60px; flex: none; display: flex; align-items: center; padding-left: 15px; background: linear-gradient(90deg, #eff3f8, #f2f3f6 45%, #f2f3f6 80%, #eff3f6); }
.dm-title h1 { margin: -4px 0 0 7px; font-size: 24px; font-weight: 400; line-height: 32px; }
.dm-title .ctl { margin: -4px 34px 0 auto; }
.dm-menu { height: 46px; flex: none; display: flex; gap: 32px; padding-left: 19px; line-height: 44px; border-bottom: 2px solid #b3b3b6; }
.dm-menu span { width: 80px; white-space: nowrap; }
.dm-menu span:first-child { width: 76px; }
.dm-tools { height: 46px; flex: none; display: flex; align-items: flex-start; padding: 8px 0 0 10px; border-bottom: 1px solid #d7d7d7; }
.dm-tools .t { width: 32px; height: 32px; }
.dm-tools i { width: 2px; height: 40px; margin: -4px 18px 0 10px; background: linear-gradient(90deg, #999 1px, #fff 1px); flex: none; }
.dm-tools .fwd { margin-left: 14px; }
.dm-tools .show { margin-left: 14px; }
.dm-gap { height: 12px; flex: none; background: #efefef; }
.tree { flex: none; height: 932px; display: flex; overflow: hidden; }
.tree ul { flex: 1; margin: 0; padding: 0; list-style: none; height: 924px; overflow: hidden; }
.tree li { display: flex; height: 36px; align-items: center; padding-left: 48px; }
.tree li.root { padding-left: 10px; }
.tree li.leaf { padding-left: 116px; }
.ch { width: 24px; height: 24px; margin: 3px 6px 0 0; fill: none; stroke: #8a8a8a; stroke-width: 2.6; }
.root .ch { margin-right: 5px; }
.ch.open { stroke: #1c1c1c; stroke-width: 3; }
.node { display: flex; height: 36px; align-items: center; padding: 0 9px 0 4px; white-space: nowrap; }
.node span { line-height: 36px; margin-left: 10px; }
.node .host { line-height: 34px; margin-left: 11px; letter-spacing: -.2px; }
.dvd { letter-spacing: .65px; }
.ide { letter-spacing: .15px; }
.ports { letter-spacing: .25px; }
.sel { background: #cfe6fd; border-radius: 3px; width: 258px; }
.ic { width: 32px; height: 32px; }
.dm-sb { width: 33px; padding: 34px 0 0 7px; background: #f0f0f0; height: 924px; }
.thumb { width: 19px; height: 792px; background: #868686; }
.dm-status { flex: 1; display: flex; padding-top: 2px; background: #efefef; border-top: 1px solid #d5d5d5; }
.dm-status div { border-right: 2px solid #dcdcdc; width: 266px; }
.dm-status div:first-child { width: 1118px; }
.dm-status div:last-child { border: 0; flex: 1; }

/* callouts */
.mark { position: absolute; border: 6px solid #e5484b; border-radius: 3px; box-shadow: 0 2px 5px rgba(0,0,0,.18); }
.box-title { left: 154px; top: 45px; width: 230px; height: 54px; }
.box-port { left: 182px; top: 587px; width: 346px; height: 68px; }
.num { position: absolute; width: 40px; height: 40px; border-radius: 50%; background: #e5484b; color: #fff; font: 700 28px/39px Inter, sans-serif; text-align: center; box-shadow: 0 2px 5px rgba(0,0,0,.18); }
.n1 { left: 1425px; top: 1650px; }
.n2 { left: 385px; top: 49px; }
.n3 { left: 539px; top: 575px; }
.arrow { position: absolute; left: 1275px; top: 1705px; }
```
